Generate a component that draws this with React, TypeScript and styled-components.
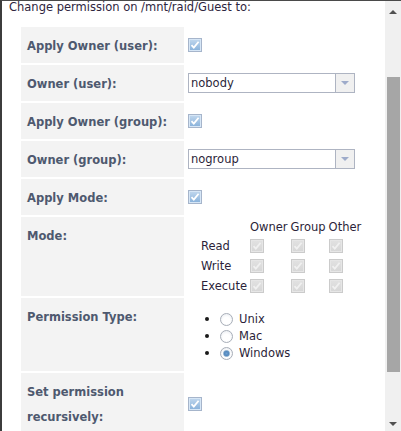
import React from "react";
import styled, { createGlobalStyle } from "styled-components";

const Global = createGlobalStyle`
  html, body { margin: 0; padding: 0; background: #ffffff; }
  body { font-family: "DejaVu Sans", Verdana, sans-serif; font-size: 11.5px; color: #2e2b3a; }
  * { box-sizing: border-box; }
`;

const Frame = styled.div`
  width: 401px;
  height: 431px;
  display: flex;
  overflow: hidden;
  border-top: 1px solid #4a4a4a;
  border-left: 2px solid #3c3c3c;
  background: #fff;
`;

const Content = styled.div`
  flex: 1;
  min-width: 0;
  display: flex;
  flex-direction: column;
`;

const Title = styled.div`
  line-height: 12px;
  padding-left: 7px;
  color: #2e2540;
  white-space: nowrap;
`;

const Form = styled.div`
  display: grid;
  grid-template-columns: 163px 1fr;
  column-gap: 2px;
  row-gap: 2px;
  margin: 14px 0 0 19px;
`;

const Label = styled.div<{ $tall?: boolean }>`
  background: #f3f3f3;
  padding: 7px 6px 4px 6px;
  line-height: 25px;
  font-weight: bold;
  color: #4e596f;
  white-space: nowrap;
  min-height: ${(p) => (p.$tall ? "73px" : "36px")};
`;

const Value = styled.div<{ $top?: boolean }>`
  display: flex;
  align-items: ${(p) => (p.$top ? "flex-start" : "center")};
  padding-left: 2px;
`;

const Check = styled.span<{ $disabled?: boolean }>`
  width: 14px;
  height: 14px;
  display: inline-flex;
  align-items: center;
  justify-content: center;
  border: 1px solid ${(p) => (p.$disabled ? "#cbcbcb" : "#a6b5cb")};
  background: ${(p) =>
    p.$disabled
      ? "linear-gradient(#e2e2e2, #d6d6d6)"
      : "linear-gradient(#c2d8ee, #86b0da)"};
  box-shadow: inset 0 0 0 1px ${(p) => (p.$disabled ? "#e6e6e6" : "#d6e6f6")};
  flex: none;
`;

const CheckBox = ({ disabled }: { disabled?: boolean }) => (
  <Check $disabled={disabled}>
    <svg width="10" height="10" viewBox="0 0 10 10">
      <path
        d="M1.5 5.2 L3.8 7.6 L8.6 1.8"
        fill="none"
        stroke={disabled ? "#f0f0f0" : "#ffffff"}
        strokeWidth="1.8"
      />
    </svg>
  </Check>
);

const Select = styled.div`
  width: 167px;
  height: 20px;
  display: flex;
  border: 1px solid #aeb4c2;
  background: #fff;
`;

const SelectText = styled.span`
  flex: 1;
  padding-left: 2px;
  line-height: 18px;
  color: #2c1f3a;
`;

const SelectButton = styled.span`
  width: 19px;
  border-left: 1px solid #aeb4c2;
  background: #f0f0f0;
  display: flex;
  align-items: center;
  justify-content: center;
`;

const Arrow = styled.span`
  width: 0;
  height: 0;
  border-left: 4px solid transparent;
  border-right: 4px solid transparent;
  border-top: 4px solid #9eabca;
`;

const Dropdown = ({ value }: { value: string }) => (
  <Select>
    <SelectText>{value}</SelectText>
    <SelectButton>
      <Arrow />
    </SelectButton>
  </Select>
);

const ModeGrid = styled.div`
  display: grid;
  grid-template-columns: auto auto auto auto;
  grid-auto-rows: 20px;
  grid-template-rows: 19px;
  column-gap: 3px;
  align-items: center;
  margin: 0 0 0 13px;
  color: #2c1f3a;
`;

const ModeCell = styled.div`
  display: flex;
  align-items: center;
`;

const RadioList = styled.div`
  display: flex;
  flex-direction: column;
  margin: 3px 0 0 17px;
`;

const RadioItem = styled.div`
  height: 17px;
  display: flex;
  align-items: center;
  color: #2c1f3a;
`;

const Bullet = styled.span`
  width: 4px;
  height: 4px;
  border-radius: 50%;
  background: #1a1a1a;
  margin-right: 11px;
`;

const Radio = styled.span<{ $on?: boolean }>`
  width: 13px;
  height: 13px;
  border-radius: 50%;
  border: 1px solid #a8aeb8;
  background: radial-gradient(circle at 50% 60%, #ffffff 40%, #e4e8ee 100%);
  display: inline-flex;
  align-items: center;
  justify-content: center;
  margin-right: 6px;
  &::after {
    content: "";
    width: 5px;
    height: 5px;
    border-radius: 50%;
    background: ${(p) => (p.$on ? "radial-gradient(#6fa0cf, #3f78b4)" : "transparent")};
    border: 1px solid ${(p) => (p.$on ? "#7aa3c9" : "transparent")};
  }
`;

const Scrollbar = styled.div`
  width: 16px;
  flex: none;
  background: #f0f0f0;
  display: flex;
  flex-direction: column;
  align-items: center;
`;

const ScrollButton = styled.div`
  height: 17px;
  width: 100%;
  display: flex;
  align-items: center;
  justify-content: center;
  flex: none;
`;

const UpArrow = styled.span`
  width: 0;
  height: 0;
  margin-top: 4px;
  border-left: 4px solid transparent;
  border-right: 4px solid transparent;
  border-bottom: 4px solid #505050;
`;

const DownArrow = styled.span`
  width: 0;
  height: 0;
  margin-top: 2px;
  border-left: 4px solid transparent;
  border-right: 4px solid transparent;
  border-top: 4px solid #505050;
`;

const Track = styled.div`
  flex: 1;
  width: 100%;
  display: flex;
  flex-direction: column;
  padding: 59px 1px 0 2px;
`;

const Thumb = styled.div`
  height: 295px;
  background: #a6a6a6;
`;

const perms = ["Read", "Write", "Execute"];

export default function App() {
  return (
    <>
      <Global />
      <Frame>
        <Content>
          <Title>Change permission on /mnt/raid/Guest to:</Title>
          <Form>
            <Label>Apply Owner (user):</Label>
            <Value>
              <CheckBox />
            </Value>

            <Label>Owner (user):</Label>
            <Value>
              <Dropdown value="nobody" />
            </Value>

            <Label>Apply Owner (group):</Label>
            <Value>
              <CheckBox />
            </Value>

            <Label>Owner (group):</Label>
            <Value>
              <Dropdown value="nogroup" />
            </Value>

            <Label>Apply Mode:</Label>
            <Value>
              <CheckBox />
            </Value>

            <Label>Mode:</Label>
            <Value $top>
              <ModeGrid>
                <span />
                <span>Owner</span>
                <span>Group</span>
                <span>Other</span>
                {perms.map((p) => (
                  <React.Fragment key={p}>
                    <ModeCell>{p}</ModeCell>
                    <ModeCell>
                      <CheckBox disabled />
                    </ModeCell>
                    <ModeCell>
                      <CheckBox disabled />
                    </ModeCell>
                    <ModeCell>
                      <CheckBox disabled />
                    </ModeCell>
                  </React.Fragment>
                ))}
              </ModeGrid>
            </Value>

            <Label $tall>Permission Type:</Label>
            <Value>
              <RadioList>
                <RadioItem>
                  <Bullet />
                  <Radio />
                  Unix
                </RadioItem>
                <RadioItem>
                  <Bullet />
                  <Radio />
                  Mac
                </RadioItem>
                <RadioItem>
                  <Bullet />
                  <Radio $on />
                  Windows
                </RadioItem>
              </RadioList>
            </Value>

            <Label>
              Set permission
              <br />
              recursively:
            </Label>
            <Value>
              <CheckBox />
            </Value>
          </Form>
        </Content>
        <Scrollbar>
          <ScrollButton>
            <UpArrow />
          </ScrollButton>
          <Track>
            <Thumb />
          </Track>
          <ScrollButton>
            <DownArrow />
          </ScrollButton>
        </Scrollbar>
      </Frame>
    </>
  );
}
